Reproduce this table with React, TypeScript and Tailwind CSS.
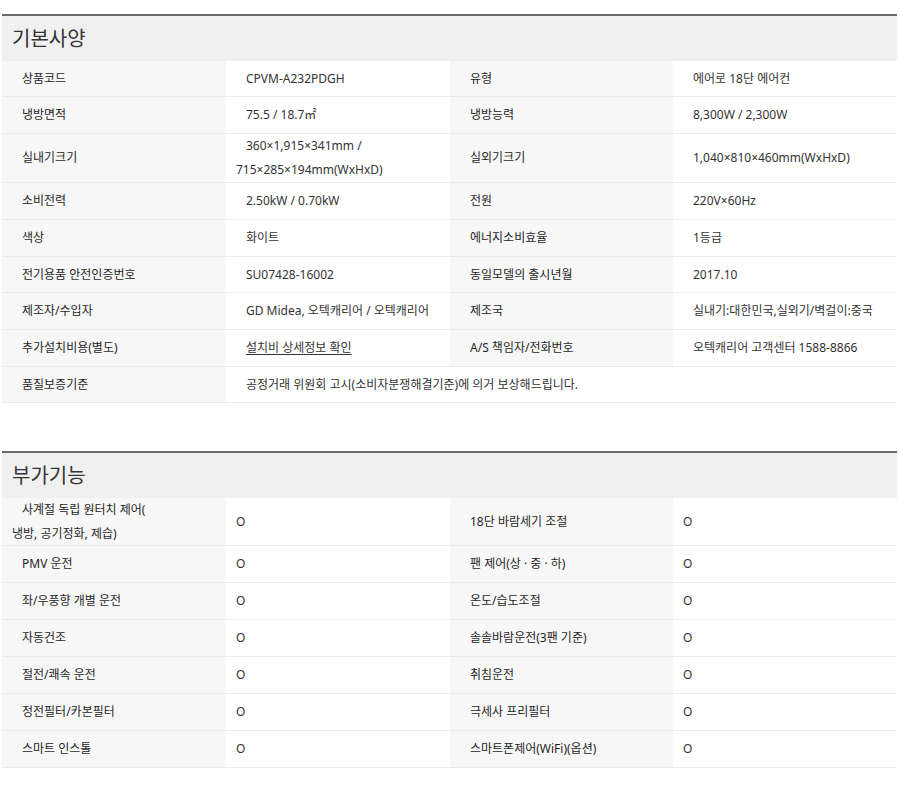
import type { ReactNode } from "react";

type SpecRow = {
  h: number;
  cells: [ReactNode, ReactNode, ReactNode?, ReactNode?];
  wide?: boolean;
};

const basicRows: SpecRow[] = [
  { h: 36, cells: ["상품코드", "CPVM-A232PDGH", "유형", "에어로 18단 에어컨"] },
  { h: 37, cells: ["냉방면적", "75.5 / 18.7㎡", "냉방능력", "8,300W / 2,300W"] },
  {
    h: 49,
    cells: [
      "실내기크기",
      <>
        360×1,915×341mm /<br />
        715×285×194mm(WxHxD)
      </>,
      "실외기크기",
      "1,040×810×460mm(WxHxD)",
    ],
  },
  { h: 37, cells: ["소비전력", "2.50kW / 0.70kW", "전원", "220V×60Hz"] },
  { h: 37, cells: ["색상", "화이트", "에너지소비효율", "1등급"] },
  { h: 36, cells: ["전기용품 안전인증번호", "SU07428-16002", "동일모델의 출시년월", "2017.10"] },
  { h: 37, cells: ["제조자/수입자", "GD Midea, 오텍캐리어 / 오텍캐리어", "제조국", "실내기:대한민국,실외기/벽걸이:중국"] },
  {
    h: 37,
    cells: [
      "추가설치비용(별도)",
      <span className="underline underline-offset-2">설치비 상세정보 확인</span>,
      "A/S 책임자/전화번호",
      "오텍캐리어 고객센터 1588-8866",
    ],
  },
  { h: 36, cells: ["품질보증기준", "공정거래 위원회 고시(소비자분쟁해결기준)에 의거 보상해드립니다."], wide: true },
];

const extraRows: SpecRow[] = [
  {
    h: 48,
    cells: [
      <>
        사계절 독립 원터치 제어(
        <br />
        냉방, 공기정화, 제습)
      </>,
      "O",
      "18단 바람세기 조절",
      "O",
    ],
  },
  { h: 37, cells: ["PMV 운전", "O", "팬 제어(상 · 중 · 하)", "O"] },
  { h: 37, cells: ["좌/우풍향 개별 운전", "O", "온도/습도조절", "O"] },
  { h: 37, cells: ["자동건조", "O", "솔솔바람운전(3팬 기준)", "O"] },
  { h: 37, cells: ["절전/쾌속 운전", "O", "취침운전", "O"] },
  { h: 37, cells: ["정전필터/카본필터", "O", "극세사 프리필터", "O"] },
  { h: 37, cells: ["스마트 인스톨", "O", "스마트폰제어(WiFi)(옵션)", "O"] },
];

function Label({ children }: { children: ReactNode }) {
  return (
    <div className="flex items-center bg-[#f7f7f7] pl-[10px] pr-2 indent-[10px] leading-[24px] text-[#1f1f1f]">
      <div>{children}</div>
    </div>
  );
}

function Value({ children, indent, wide }: { children: ReactNode; indent: boolean; wide?: boolean }) {
  return (
    <div
      className={
        "flex items-center bg-white pr-2 leading-[24px] text-[#333] " +
        (indent ? "pl-[10px] indent-[10px] " : "pl-[10px] ") +
        (wide ? "col-span-3" : "")
      }
    >
      <div>{children}</div>
    </div>
  );
}

function SpecTable({ title, rows, indentValues }: { title: string; rows: SpecRow[]; indentValues: boolean }) {
  return (
    <section className="border-t-2 border-[#6b6b6b]">
      <h2 className="flex h-[45px] items-center bg-[#f0f0f0] pl-[10px] text-[20px] font-normal text-[#333]">
        {title}
      </h2>
      {rows.map((row, i) => (
        <div
          key={i}
          className="grid grid-cols-[224px_224px_223px_224px] overflow-hidden border-b border-[#ebebeb]"
          style={{ height: row.h }}
        >
          <Label>{row.cells[0]}</Label>
          <Value indent={indentValues} wide={row.wide}>
            {row.cells[1]}
          </Value>
          {!row.wide && (
            <>
              <Label>{row.cells[2]}</Label>
              <Value indent={indentValues}>{row.cells[3]}</Value>
            </>
          )}
        </div>
      ))}
    </section>
  );
}

export default function App() {
  return (
    <div
      className="min-h-[793px] bg-white pt-[14px] text-[12px]"
      style={{ fontFamily: '"Noto Sans", "Noto Sans CJK KR", sans-serif' }}
    >
      <div className="ml-[2px] flex w-[895px] flex-col gap-[48px]">
        <SpecTable title="기본사양" rows={basicRows} indentValues />
        <SpecTable title="부가기능" rows={extraRows} indentValues={false} />
      </div>
    </div>
  );
}
